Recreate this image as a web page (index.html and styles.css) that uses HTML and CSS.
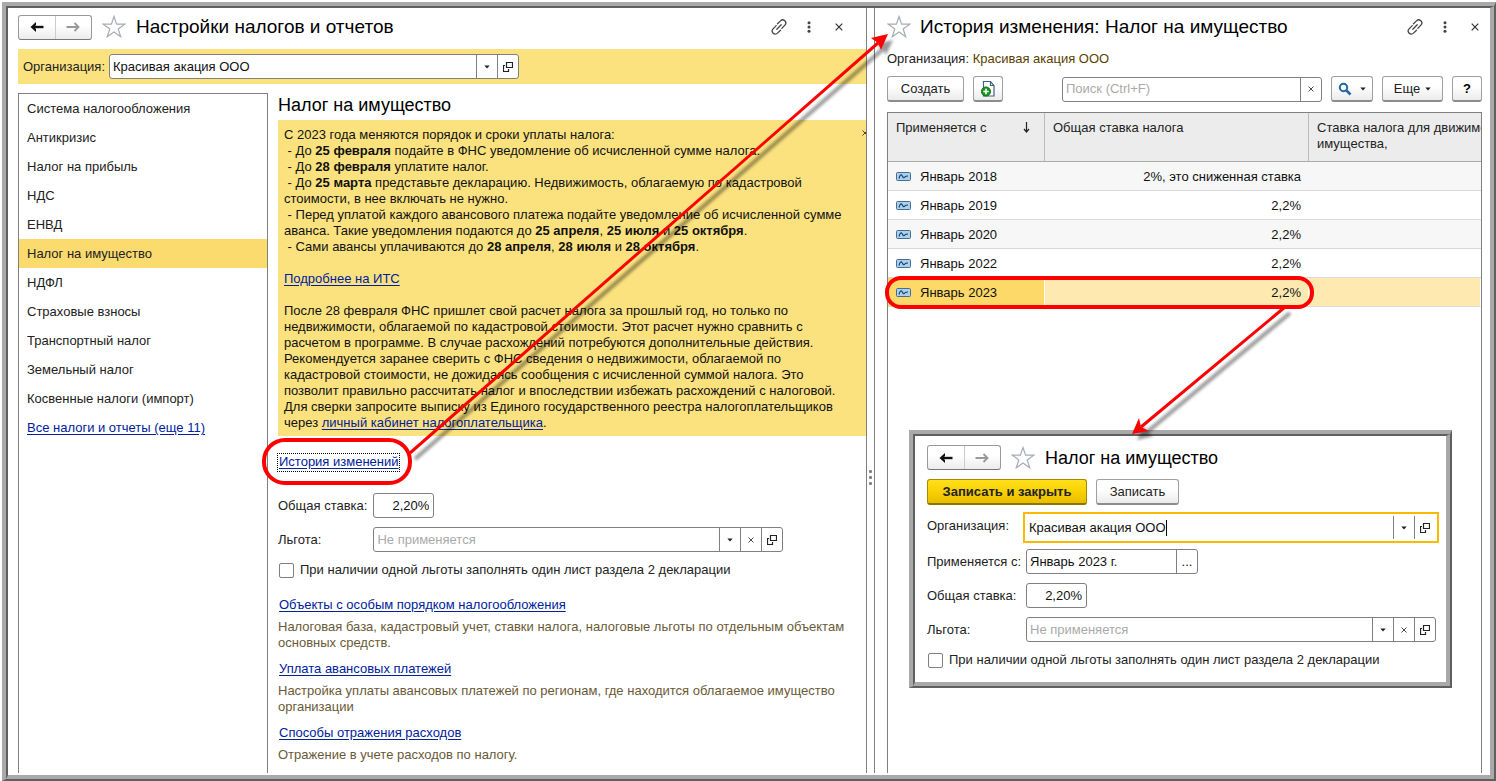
FILE: index.html
```html
<!DOCTYPE html>
<html lang="ru">
<head>
<meta charset="utf-8">
<title>Настройки налогов и отчетов</title>
<link rel="stylesheet" href="styles.css">
</head>
<body>
<svg class="sprite" width="0" height="0" aria-hidden="true">
  <symbol id="back" viewBox="0 0 14 12"><path d="M13.500 6H3" stroke="currentColor" stroke-width="2.400" fill="none"/><path d="M6 1 0.500 6l5.500 5V8L4 6l2-2z" fill="currentColor"/></symbol>
  <symbol id="forward" viewBox="0 0 14 12"><path d="M.500 6h12M8.500 2l4 4-4 4" stroke="currentColor" stroke-width="1.900" fill="none"/></symbol>
  <symbol id="star" viewBox="0 0 24 24"><path d="M12 1.500 14.600 9.200H22.700L16.200 13.900 18.700 21.800 12 17.100 5.300 21.800 7.800 13.900 1.300 9.200H9.400z" fill="#fff" stroke="#a5acb6" stroke-width="1.200"/></symbol>
  <symbol id="link" viewBox="0 0 16 16"><g fill="none" stroke="#444" stroke-width="1.300" stroke-linecap="round"><path d="M6.500 4.800 9.500 1.900a2.900 2.900 0 0 1 4.400 4.200L10.800 9.400"/><path d="M5.200 6.600 2.100 9.900a2.900 2.900 0 0 0 4.400 4.200L9.500 11.200"/><path d="M5.800 10.200 10.200 5.800"/></g></symbol>
  <symbol id="dots" viewBox="0 0 4 12"><g fill="#444"><circle cx="2" cy="1.700" r="1.500"/><circle cx="2" cy="6" r="1.500"/><circle cx="2" cy="10.300" r="1.500"/></g></symbol>
  <symbol id="cross" viewBox="0 0 8 8"><path d="M.7.7l6.600 6.600M7.300.7.7 7.300" stroke="#333" stroke-width="1.200"/></symbol>
  <symbol id="down" viewBox="0 0 6 4"><path d="M.3.500h5.400L3 3.500z" fill="#222"/></symbol>
  <symbol id="open" viewBox="0 0 10 10"><path d="M3.500.500h6v5h-6zM2 3.500H.500v6h5V7" fill="none" stroke="#222" stroke-width="1.200"/></symbol>
  <symbol id="record" viewBox="0 0 15 9"><rect x=".500" y=".500" width="14" height="8" rx="1" fill="#a9d0ef" stroke="#476c8c"/><path d="M3 6.500C4 3 5 2 6 3.500S7.500 7 9 4.800c.500-.600 1-.800 3-.800" fill="none" stroke="#173f66" stroke-width="1.100"/></symbol>
</svg>

<div class="frame"><div class="bevel workspace">
  <main class="pane settings">
    <header class="head">
      <div class="history"><button aria-label="Назад"><svg class="arr"><use href="#back"/></svg></button><button aria-label="Вперед" class="off"><svg class="arr"><use href="#forward"/></svg></button></div>
      <svg class="star"><use href="#star"/></svg>
      <h1>Настройки налогов и отчетов</h1>
      <div class="tools"><button aria-label="Ссылка"><svg class="i-link"><use href="#link"/></svg></button><button aria-label="Меню"><svg class="i-dots"><use href="#dots"/></svg></button><button aria-label="Закрыть"><svg class="i-cross"><use href="#cross"/></svg></button></div>
    </header>
    <div class="orgbar">
      <label for="org">Организация:</label>
      <div class="combo"><input id="org" value="Красивая акация ООО"><button aria-label="Выбрать"><svg class="i-down"><use href="#down"/></svg></button><button aria-label="Открыть"><svg class="i-open"><use href="#open"/></svg></button></div>
    </div>
    <div class="body">
      <nav class="sections">
        <a href="#">Система налогообложения</a>
        <a href="#">Антикризис</a>
        <a href="#">Налог на прибыль</a>
        <a href="#">НДС</a>
        <a href="#">ЕНВД</a>
        <a href="#" class="current">Налог на имущество</a>
        <a href="#">НДФЛ</a>
        <a href="#">Страховые взносы</a>
        <a href="#">Транспортный налог</a>
        <a href="#">Земельный налог</a>
        <a href="#">Косвенные налоги (импорт)</a>
        <a href="#" class="link">Все налоги и отчеты (еще 11)</a>
      </nav>
      <section class="content">
        <h2>Налог на имущество</h2>
        <div class="notice">
          <button class="dismiss" aria-label="Скрыть"><svg><use href="#cross"/></svg></button>
          <p>С 2023 года меняются порядок и сроки уплаты налога:<br>
          &nbsp;- До <b>25 февраля</b> подайте в ФНС уведомление об исчисленной сумме налога.<br>
          &nbsp;- До <b>28 февраля</b> уплатите налог.<br>
          &nbsp;- До <b>25 марта</b> представьте декларацию. Недвижимость, облагаемую по кадастровой стоимости, в нее включать не нужно.<br>
          &nbsp;- Перед уплатой каждого авансового платежа подайте уведомление об исчисленной сумме аванса. Такие уведомления подаются до <b>25 апреля</b>, <b>25 июля</b> и <b>25 октября</b>.<br>
          &nbsp;- Сами авансы уплачиваются до <b>28 апреля</b>, <b>28 июля</b> и <b>28 октября</b>.</p>
          <p><a class="link" href="#">Подробнее на ИТС</a></p>
          <p>После 28 февраля ФНС пришлет свой расчет налога за прошлый год, но только по недвижимости, облагаемой по кадастровой стоимости. Этот расчет нужно сравнить с расчетом в программе. В случае расхождений потребуются дополнительные действия. Рекомендуется заранее сверить с ФНС сведения о недвижимости, облагаемой по кадастровой стоимости, не дожидаясь сообщения с исчисленной суммой налога. Это позволит правильно рассчитать налог и впоследствии избежать расхождений с налоговой. Для сверки запросите выписку из Единого государственного реестра налогоплательщиков через <a class="link" href="#">личный кабинет налогоплательщика</a>.</p>
        </div>
        <div class="historylink"><a class="link focused" href="#">История изменений</a></div>
        <div class="fields">
          <label for="rate">Общая ставка:</label><input id="rate" class="box rate" value="2,20%">
          <label for="benefit">Льгота:</label>
          <div class="combo"><input id="benefit" placeholder="Не применяется"><button aria-label="Выбрать"><svg class="i-down"><use href="#down"/></svg></button><button aria-label="Очистить"><svg class="i-clear"><use href="#cross"/></svg></button><button aria-label="Открыть"><svg class="i-open"><use href="#open"/></svg></button></div>
        </div>
        <label class="check"><input type="checkbox">При наличии одной льготы заполнять один лист раздела 2 декларации</label>
        <dl class="more">
          <dt><a class="link" href="#">Объекты с особым порядком налогообложения</a></dt>
          <dd>Налоговая база, кадастровый учет, ставки налога, налоговые льготы по отдельным объектам основных средств.</dd>
          <dt><a class="link" href="#">Уплата авансовых платежей</a></dt>
          <dd>Настройка уплаты авансовых платежей по регионам, где находится облагаемое имущество организации</dd>
          <dt><a class="link" href="#">Способы отражения расходов</a></dt>
          <dd>Отражение в учете расходов по налогу.</dd>
        </dl>
      </section>
    </div>
  </main>

  <div class="splitter"><i></i><i></i><i></i></div>

  <aside class="pane log">
    <header class="head">
      <svg class="star"><use href="#star"/></svg>
      <h1>История изменения: Налог на имущество</h1>
      <div class="tools"><button aria-label="Ссылка"><svg class="i-link"><use href="#link"/></svg></button><button aria-label="Меню"><svg class="i-dots"><use href="#dots"/></svg></button><button aria-label="Закрыть"><svg class="i-cross"><use href="#cross"/></svg></button></div>
    </header>
    <p class="owner">Организация: <span>Красивая акация ООО</span></p>
    <div class="commands">
      <button class="btn create">Создать</button>
      <button class="btn small" aria-label="Создать копированием"><svg width="16" height="18" viewBox="0 0 16 18"><path d="M3.500 1.500h7l3.500 4v10.500H3.500z" fill="#fff" stroke="#3f6384" stroke-width="1.200"/><path d="M10.500 1.500v4H14" fill="none" stroke="#3f6384" stroke-width="1.200"/><circle cx="6" cy="11.500" r="4.500" fill="#159a1d" stroke="#0b6f12"/><path d="M6 8.800v5.400M3.300 11.500h5.400" stroke="#fff" stroke-width="1.600"/></svg></button>
      <div class="combo search"><input placeholder="Поиск (Ctrl+F)" aria-label="Поиск"><button aria-label="Очистить"><svg class="i-clear"><use href="#cross"/></svg></button></div>
      <button class="btn find" aria-label="Найти"><svg width="14" height="14" viewBox="0 0 14 14"><circle cx="5.500" cy="5.500" r="3.700" fill="none" stroke="#1f66a5" stroke-width="2"/><path d="M8.300 8.300 12.500 12.500" stroke="#1f66a5" stroke-width="2.600"/></svg><svg class="i-down"><use href="#down"/></svg></button>
      <button class="btn menu">Еще<svg class="i-down"><use href="#down"/></svg></button>
      <button class="btn small help">?</button>
    </div>
    <div class="grid">
      <table>
        <colgroup><col class="c1"><col class="c2"><col></colgroup>
        <thead><tr><th>Применяется с<svg class="sort" width="7" height="11" viewBox="0 0 7 11"><path d="M3.500 0v9.500M1 7l2.500 3L6 7" fill="none" stroke="#222" stroke-width="1.200"/></svg></th><th>Общая ставка налога</th><th>Ставка налога для движимого<br>имущества,</th></tr></thead>
        <tbody>
          <tr><td><svg class="rec"><use href="#record"/></svg>Январь 2018</td><td>2%, это сниженная ставка</td><td></td></tr>
          <tr><td><svg class="rec"><use href="#record"/></svg>Январь 2019</td><td>2,2%</td><td></td></tr>
          <tr><td><svg class="rec"><use href="#record"/></svg>Январь 2020</td><td>2,2%</td><td></td></tr>
          <tr><td><svg class="rec"><use href="#record"/></svg>Январь 2022</td><td>2,2%</td><td></td></tr>
          <tr class="selected"><td><svg class="rec"><use href="#record"/></svg>Январь 2023</td><td>2,2%</td><td></td></tr>
        </tbody>
      </table>
    </div>

    <section class="frame dialog"><div class="bevel dialog-body">
      <header class="head">
        <div class="history"><button aria-label="Назад"><svg class="arr"><use href="#back"/></svg></button><button aria-label="Вперед" class="off"><svg class="arr"><use href="#forward"/></svg></button></div>
        <svg class="star"><use href="#star"/></svg>
        <h1>Налог на имущество</h1>
      </header>
      <div class="actions"><button class="btn primary">Записать и закрыть</button><button class="btn save">Записать</button></div>
      <div class="fields">
        <label for="dorg">Организация:</label>
        <div class="combo active"><div class="typed"><input id="dorg" value="Красивая акация ООО"><i class="caret"></i></div><button aria-label="Выбрать"><svg class="i-down"><use href="#down"/></svg></button><button aria-label="Открыть"><svg class="i-open"><use href="#open"/></svg></button></div>
        <label for="dfrom">Применяется с:</label>
        <div class="combo date"><input id="dfrom" value="Январь 2023 г."><button aria-label="Выбрать период">...</button></div>
        <label for="drate">Общая ставка:</label><input id="drate" class="box rate" value="2,20%">
        <label for="dbenefit">Льгота:</label>
        <div class="combo"><input id="dbenefit" placeholder="Не применяется"><button aria-label="Выбрать"><svg class="i-down"><use href="#down"/></svg></button><button aria-label="Очистить"><svg class="i-clear"><use href="#cross"/></svg></button><button aria-label="Открыть"><svg class="i-open"><use href="#open"/></svg></button></div>
      </div>
      <label class="check"><input type="checkbox">При наличии одной льготы заполнять один лист раздела 2 декларации</label>
    </div></section>
  </aside>
</div></div>

<svg class="marks" width="1496" height="781" viewBox="0 0 1496 781" aria-hidden="true">
  <defs><filter id="soft" x="-10%" y="-10%" width="120%" height="120%"><feGaussianBlur stdDeviation="1.500"/></filter></defs>
  <g transform="translate(5 6)" opacity=".4" filter="url(#soft)">
    <path d="M410 453 878 43M1285 307 1141 427" stroke="#000" stroke-width="4"/>
    <path d="M888 34 881 49 878 43 871 38zM1132 434 1139 419 1141 427 1149 430z" fill="#000"/>
  </g>
  <g fill="none" stroke="#f00">
    <path d="M410 453 878 43M1285 307 1141 427" stroke-width="3"/>
    <rect x="264" y="440" width="146" height="43" rx="21" stroke-width="4"/>
    <rect x="887" y="278" width="425" height="29" rx="14" stroke-width="4"/>
  </g>
  <path d="M888 34 881 50 878 43 871 38zM1132 434 1139 418 1141 427 1149 431z" fill="#f00"/>
</svg>
</body>
</html>
```
FILE: styles.css
```css
* { box-sizing: border-box; }
body { margin: 0; background: #fff; color: #222; font: 13px/16px "Liberation Sans", Arial, sans-serif; }
button, input { font: inherit; color: #111; margin: 0; }
button { padding: 0; border: 0; background: none; display: inline-flex; align-items: center; justify-content: center; }
svg { display: block; flex: none; }
h1, h2, p, dl, dd { margin: 0; }
h1, h2 { font-size: 18px; line-height: 24px; font-weight: 400; color: #000; }
.sprite { position: absolute; }

.frame { display: flex; border: solid #a9a9a9; border-width: 4px 2px 2px 4px; border-right-color: #5f5f5f; border-bottom-color: #5f5f5f; background: #fff; }
.bevel { flex: 1; min-width: 0; border: solid #5f5f5f; border-width: 2px 4px 4px 2px; border-right-color: #a9a9a9; border-bottom-color: #a9a9a9; }
body > .frame { min-height: calc(100vh - 2px); margin: 2px 0 0 2px; }
.workspace { display: flex; padding-bottom: 2px; }
.pane { min-width: 0; display: flex; flex-direction: column; }
.settings { flex: 848 1 0; padding: 0 0 0 10px; }
.splitter { flex: none; width: 9px; border: solid #808080; border-width: 0 1px; display: flex; flex-direction: column; gap: 3px; align-items: center; justify-content: center; padding-top: 174px; }
.splitter i { width: 3px; height: 3px; border-radius: 1px; background: #808080; }
.log { flex: 595 1 0; padding: 0 8px 0 12px; position: relative; }

.head { display: flex; align-items: center; height: 41px; padding-bottom: 3px; }
.pane > .head h1 { font-size: 19px; }
.history { display: flex; width: 74px; height: 25px; border: 1px solid #999; border-bottom-color: #777; border-radius: 3px; background: linear-gradient(#fff 40%, #ececec); }
.history button { flex: 1; color: #111; }
.history .off { color: #999; border-left: 1px solid #ccc; }
.arr { width: 14px; height: 12px; }
.star { width: 24px; height: 24px; margin-left: 10px; }
.head h1 { margin-left: 10px; white-space: nowrap; }
.log > .head .star { margin-left: 0; }
.log > .head h1 { margin-left: 9px; }
.tools { margin-left: auto; display: flex; align-items: center; }
.tools button { width: 30px; height: 24px; }
.settings .tools { margin-right: 12px; }
.log .tools { margin-right: -8px; }
.i-link { width: 16px; height: 16px; }
.i-dots { width: 4px; height: 12px; }
.i-cross { width: 8px; height: 8px; }
.i-down { width: 6px; height: 4px; }
.i-clear { width: 6px; height: 6px; }
.i-open { width: 10px; height: 10px; }

.orgbar { display: flex; align-items: center; gap: 4px; height: 35px; padding-left: 5px; background: #fbe27f; }
.combo { display: flex; width: 410px; height: 25px; border: 1px solid #808080; border-radius: 3px; background: #fff; }
.combo input { flex: 1; min-width: 0; border: 0; padding: 0 3px; background: none; outline: 0; }
.combo button { width: 21px; border-left: 1px solid #808080; }
::placeholder { color: #aaa; opacity: 1; }

.body { flex: 1; display: flex; gap: 10px; padding-top: 9px; }
.sections { flex: none; width: 250px; border: 1px solid #808080; border-bottom: 0; }
.sections a { display: block; line-height: 29px; padding-left: 8px; color: #222; text-decoration: none; }
.sections .current { background: #fcdb6e; }
.sections .link, .link { color: #00219c; text-decoration: underline; text-underline-offset: 2px; }
.content { flex: 1; min-width: 0; }
.content h2 { height: 27px; }
.notice { position: relative; background: #fbe27f; padding: 7px 16px 5px 6px; color: #111; }
.notice p + p { margin-top: 16px; }
.dismiss { position: absolute; right: 0; top: 10px; width: 4px; height: 6px; overflow: hidden; justify-content: flex-start; }
.dismiss svg { width: 6px; height: 6px; }
.historylink { display: flex; padding-top: 18px; height: 57px; }
.focused { outline: 1px dotted #000; height: 17px; padding: 0 0 0 1px; }
.fields { display: grid; grid-template-columns: max-content 1fr; gap: 9px 6px; align-items: center; }
.box { height: 25px; border: 1px solid #808080; border-radius: 3px; background: #fff; }
.rate { width: 61px; text-align: right; padding: 0 4px; }
.check { display: flex; align-items: center; gap: 6px; margin-top: 10px; }
.check input { appearance: none; width: 15px; height: 15px; margin: 0 0 0 1px; border: 1px solid #808080; border-radius: 2px; background: #fff; }
.more { padding: 19px 16px 0 0; }
.more dt { padding-left: 1px; }
.more dd { color: #6a5a36; margin: 6px 0 10px; }

.owner { height: 27px; padding-top: 2px; white-space: nowrap; }
.owner span { color: #5a3f00; }
.commands { display: flex; align-items: center; gap: 9px; }
.btn { height: 26px; border: 1px solid #a0a0a0; border-bottom: 2px solid #8c8c8c; border-radius: 3px; background: linear-gradient(#fff 40%, #ebebeb); color: #222; }
.create { width: 77px; }
.small { width: 30px; }
.search { width: 260px; margin-left: auto; }
.find { width: 42px; gap: 8px; }
.menu { width: 61px; gap: 5px; }
.help { color: #000; font-weight: 700; }
.grid { flex: 1; margin-top: 10px; border: 1px solid #808080; border-bottom: 0; overflow: hidden; }
table { width: 100%; table-layout: fixed; border-collapse: separate; border-spacing: 0; }
.c1 { width: 157px; }
.c2 { width: 264px; }
th { height: 49px; padding: 7px 8px; vertical-align: top; text-align: left; font-weight: 400; white-space: nowrap; background: #ececec; border-right: 1px solid #bbb; border-bottom: 1px solid #aaa; }
th:first-child svg { float: right; margin: 2px 6px 0 0; }
th:last-child, td:last-child { border-right: 0; }
td { height: 29px; padding: 2px 8px 0; border-bottom: 1px solid #d9d9d9; color: #111; }
td + td { text-align: right; }
tr:nth-child(odd) td { background: #f7f7f7; }
.rec { display: inline-block; width: 15px; height: 9px; margin-right: 9px; }
tr.selected td { background: #feeab1; border-right: 1px solid #fff; padding-right: 7px; }
tr.selected td:first-child { background: #fcd968; }

.dialog { position: absolute; top: 422px; left: 34px; right: 38px; }
.dialog-body { padding: 0 10px 14px 12px; }
.dialog .head { height: 43px; padding: 0; }
.actions { display: flex; gap: 9px; margin-bottom: 7px; }
.primary { width: 160px; font-weight: 700; background: linear-gradient(#ffe01a, #f7cd00 60%, #e8bd00); border-color: #a58a00; border-bottom-color: #8c7500; }
.save { width: 83px; }
.dialog .fields { grid-template-columns: 93px 1fr; }
.dialog .fields label { white-space: nowrap; }
.active { width: auto; height: 31px; margin: 0 -3px -3px; padding: 2px; border: 2px solid #fdb900; border-radius: 0; }
.typed { flex: 1; display: flex; align-items: center; }
.active .typed input { flex: none; width: 139px; padding: 0 0 0 2px; }
.caret { width: 1px; height: 16px; background: #000; }
.date { width: 172px; }
.marks { position: absolute; left: 0; top: 0; pointer-events: none; }
```
